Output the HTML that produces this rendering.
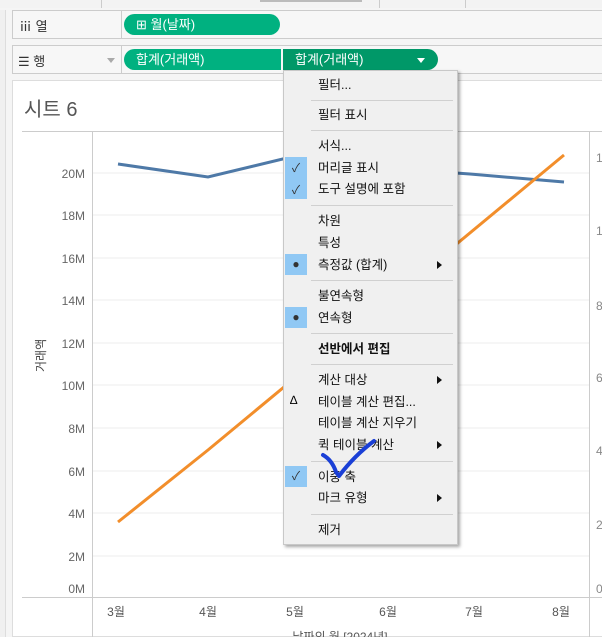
<!DOCTYPE html>
<html><head><meta charset="utf-8"><style>
*{margin:0;padding:0;box-sizing:border-box}
body{width:602px;height:637px;overflow:hidden;background:#f5f5f5;font-family:"Liberation Sans","Noto Sans CJK KR",sans-serif;position:relative}
.a{position:absolute}
.pill{position:absolute;height:21px;border-radius:11px;color:#fff;font-size:13px;line-height:21px;padding-left:12px;background:#00b180}
.m{position:absolute;left:318px;font-size:12.5px;color:#111;line-height:16px}
.sep{position:absolute;left:311px;width:142px;height:1px;background:#d0d0d0}
.ck{position:absolute;left:285px;width:22px;height:21px;background:#90c8f4;color:#333;font-size:12px;text-align:center;line-height:21px}
.ar{position:absolute;left:437px;width:0;height:0;border-top:4px solid transparent;border-bottom:4px solid transparent;border-left:5px solid #111}
</style></head><body>
<div class="a" style="left:0;top:0;width:602px;height:8px;background:#f3f3f3"></div>
<div class="a" style="left:101px;top:0;width:1px;height:8px;background:#ccc"></div>
<div class="a" style="left:379px;top:0;width:1px;height:8px;background:#ccc"></div>
<div class="a" style="left:465px;top:0;width:1px;height:8px;background:#ccc"></div>
<div class="a" style="left:260px;top:0;width:102px;height:2px;background:#bbb"></div>
<!-- shelves -->
<div class="a" style="left:12px;top:10px;width:592px;height:29px;background:#f7f7f7;border:1px solid #ccc"></div>
<div class="a" style="left:121px;top:10px;width:1px;height:29px;background:#ccc"></div>
<div class="a" style="left:19px;top:16px;font-size:13px;color:#333">ⅲ 열</div>
<div class="pill" style="left:124px;top:14px;width:156px">⊞ 월(날짜)</div>
<div class="a" style="left:12px;top:45px;width:592px;height:29px;background:#f7f7f7;border:1px solid #ccc"></div>
<div class="a" style="left:121px;top:45px;width:1px;height:29px;background:#ccc"></div>
<div class="a" style="left:18px;top:51px;font-size:13px;color:#333">☰ 행</div>
<div class="a" style="left:107px;top:58px;border-left:4px solid transparent;border-right:4px solid transparent;border-top:5px solid #aaa"></div>
<div class="pill" style="left:124px;top:49px;width:157px;border-radius:11px 0 0 11px">합계(거래액)</div>
<div class="pill" style="left:283px;top:49px;width:155px;background:#009868;border-radius:0 11px 11px 0">합계(거래액)</div>
<div class="a" style="left:417px;top:58px;border-left:4px solid transparent;border-right:4px solid transparent;border-top:5px solid #fff"></div>
<!-- left panel -->
<div class="a" style="left:0;top:10px;width:6px;height:627px;background:#f0f0f0;border-right:1px solid #ddd"></div>
<!-- sheet -->
<div class="a" style="left:12px;top:80px;width:592px;height:557px;background:#fff;border:1px solid #ddd"></div>
<div class="a" style="left:24px;top:93px;font-size:20px;color:#555">시트 6</div>
<div class="a" style="left:22px;top:131px;width:580px;height:1px;background:#ccc"></div>
<div class="a" style="font-size:12px;color:#444;left:32px;top:372px;transform:rotate(-90deg);transform-origin:0 0">거래액</div>
<svg class="a" style="left:0;top:0" width="602" height="637">
<g stroke="#eee" stroke-width="1">
<line x1="93" y1="173" x2="590" y2="173"/><line x1="93" y1="215" x2="590" y2="215"/><line x1="93" y1="258" x2="590" y2="258"/><line x1="93" y1="300" x2="590" y2="300"/><line x1="93" y1="343" x2="590" y2="343"/><line x1="93" y1="385" x2="590" y2="385"/><line x1="93" y1="428" x2="590" y2="428"/><line x1="93" y1="471" x2="590" y2="471"/><line x1="93" y1="513" x2="590" y2="513"/><line x1="93" y1="556" x2="590" y2="556"/></g>
<line x1="92.5" y1="131" x2="92.5" y2="637" stroke="#ccc"/>
<line x1="589.5" y1="131" x2="589.5" y2="637" stroke="#ccc"/>
<line x1="22" y1="597.5" x2="602" y2="597.5" stroke="#ccc"/>
<g fill="#666" font-size="12" text-anchor="end" font-family="Liberation Sans,sans-serif">
<text x="85" y="178">20M</text><text x="85" y="220">18M</text><text x="85" y="263">16M</text><text x="85" y="305">14M</text><text x="85" y="348">12M</text><text x="85" y="390">10M</text><text x="85" y="433">8M</text><text x="85" y="476">6M</text><text x="85" y="518">4M</text><text x="85" y="561">2M</text><text x="85" y="593">0M</text></g>
<g fill="#888" font-size="12" font-family="Liberation Sans,sans-serif"><text x="596" y="162">1</text><text x="596" y="235">1</text><text x="596" y="310">8</text><text x="596" y="382">6</text><text x="596" y="455">4</text><text x="596" y="529">2</text><text x="596" y="593">0</text></g>
<g fill="#555" font-size="12" text-anchor="middle" font-family="Liberation Sans,Noto Sans CJK KR,sans-serif"><text x="116" y="616">3월</text><text x="208" y="616">4월</text><text x="295" y="616">5월</text><text x="388" y="616">6월</text><text x="474" y="616">7월</text><text x="561" y="616">8월</text><text x="340" y="641">날짜의 월 [2024년]</text></g>
<polyline points="118,164 208,177 295,156 385,168 470,174 564,182" fill="none" stroke="#4e79a7" stroke-width="3"/>
<polyline points="118,522 208,450 564,155" fill="none" stroke="#f28e2b" stroke-width="3"/>
</svg>
<!-- menu -->
<div class="a" style="left:283px;top:70px;width:175px;height:475px;background:#f0f0f0;border:1px solid #c8c8c8;box-shadow:2px 2px 3px rgba(0,0,0,0.35)"></div>
<div class="m" style="top:77px">필터...</div><div class="sep" style="top:100px"></div>
<div class="m" style="top:107px">필터 표시</div><div class="sep" style="top:130px"></div>
<div class="m" style="top:138px">서식...</div>
<div class="ck" style="top:157px;height:42px;line-height:22px">✓<br>✓</div>
<div class="m" style="top:160px">머리글 표시</div>
<div class="m" style="top:181px">도구 설명에 포함</div><div class="sep" style="top:205px"></div>
<div class="m" style="top:213px">차원</div>
<div class="m" style="top:235px">특성</div>
<div class="ck" style="top:254px">●</div>
<div class="m" style="top:257px">측정값 (합계)</div><div class="ar" style="top:261px"></div><div class="sep" style="top:280px"></div>
<div class="m" style="top:288px">불연속형</div>
<div class="ck" style="top:307px">●</div>
<div class="m" style="top:310px">연속형</div><div class="sep" style="top:333px"></div>
<div class="m" style="top:341px;font-weight:bold">선반에서 편집</div><div class="sep" style="top:364px"></div>
<div class="m" style="top:372px">계산 대상</div><div class="ar" style="top:376px"></div>
<div class="a" style="left:290px;top:393px;font-size:12px">∆</div>
<div class="m" style="top:394px">테이블 계산 편집...</div>
<div class="m" style="top:415px">테이블 계산 지우기</div>
<div class="m" style="top:437px">퀵 테이블 계산</div><div class="ar" style="top:441px"></div><div class="sep" style="top:461px"></div>
<div class="ck" style="top:466px">✓</div>
<div class="m" style="top:469px">이중 축</div>
<div class="m" style="top:490px">마크 유형</div><div class="ar" style="top:494px"></div><div class="sep" style="top:514px"></div>
<div class="m" style="top:522px">제거</div>
<svg class="a" style="left:0;top:0" width="602" height="637"><path d="M323,455 Q332,460 336,472 L339,476 Q355,455 374,441" fill="none" stroke="#1a3fd6" stroke-width="4" stroke-linecap="round" stroke-linejoin="round"/></svg>
</body></html>
